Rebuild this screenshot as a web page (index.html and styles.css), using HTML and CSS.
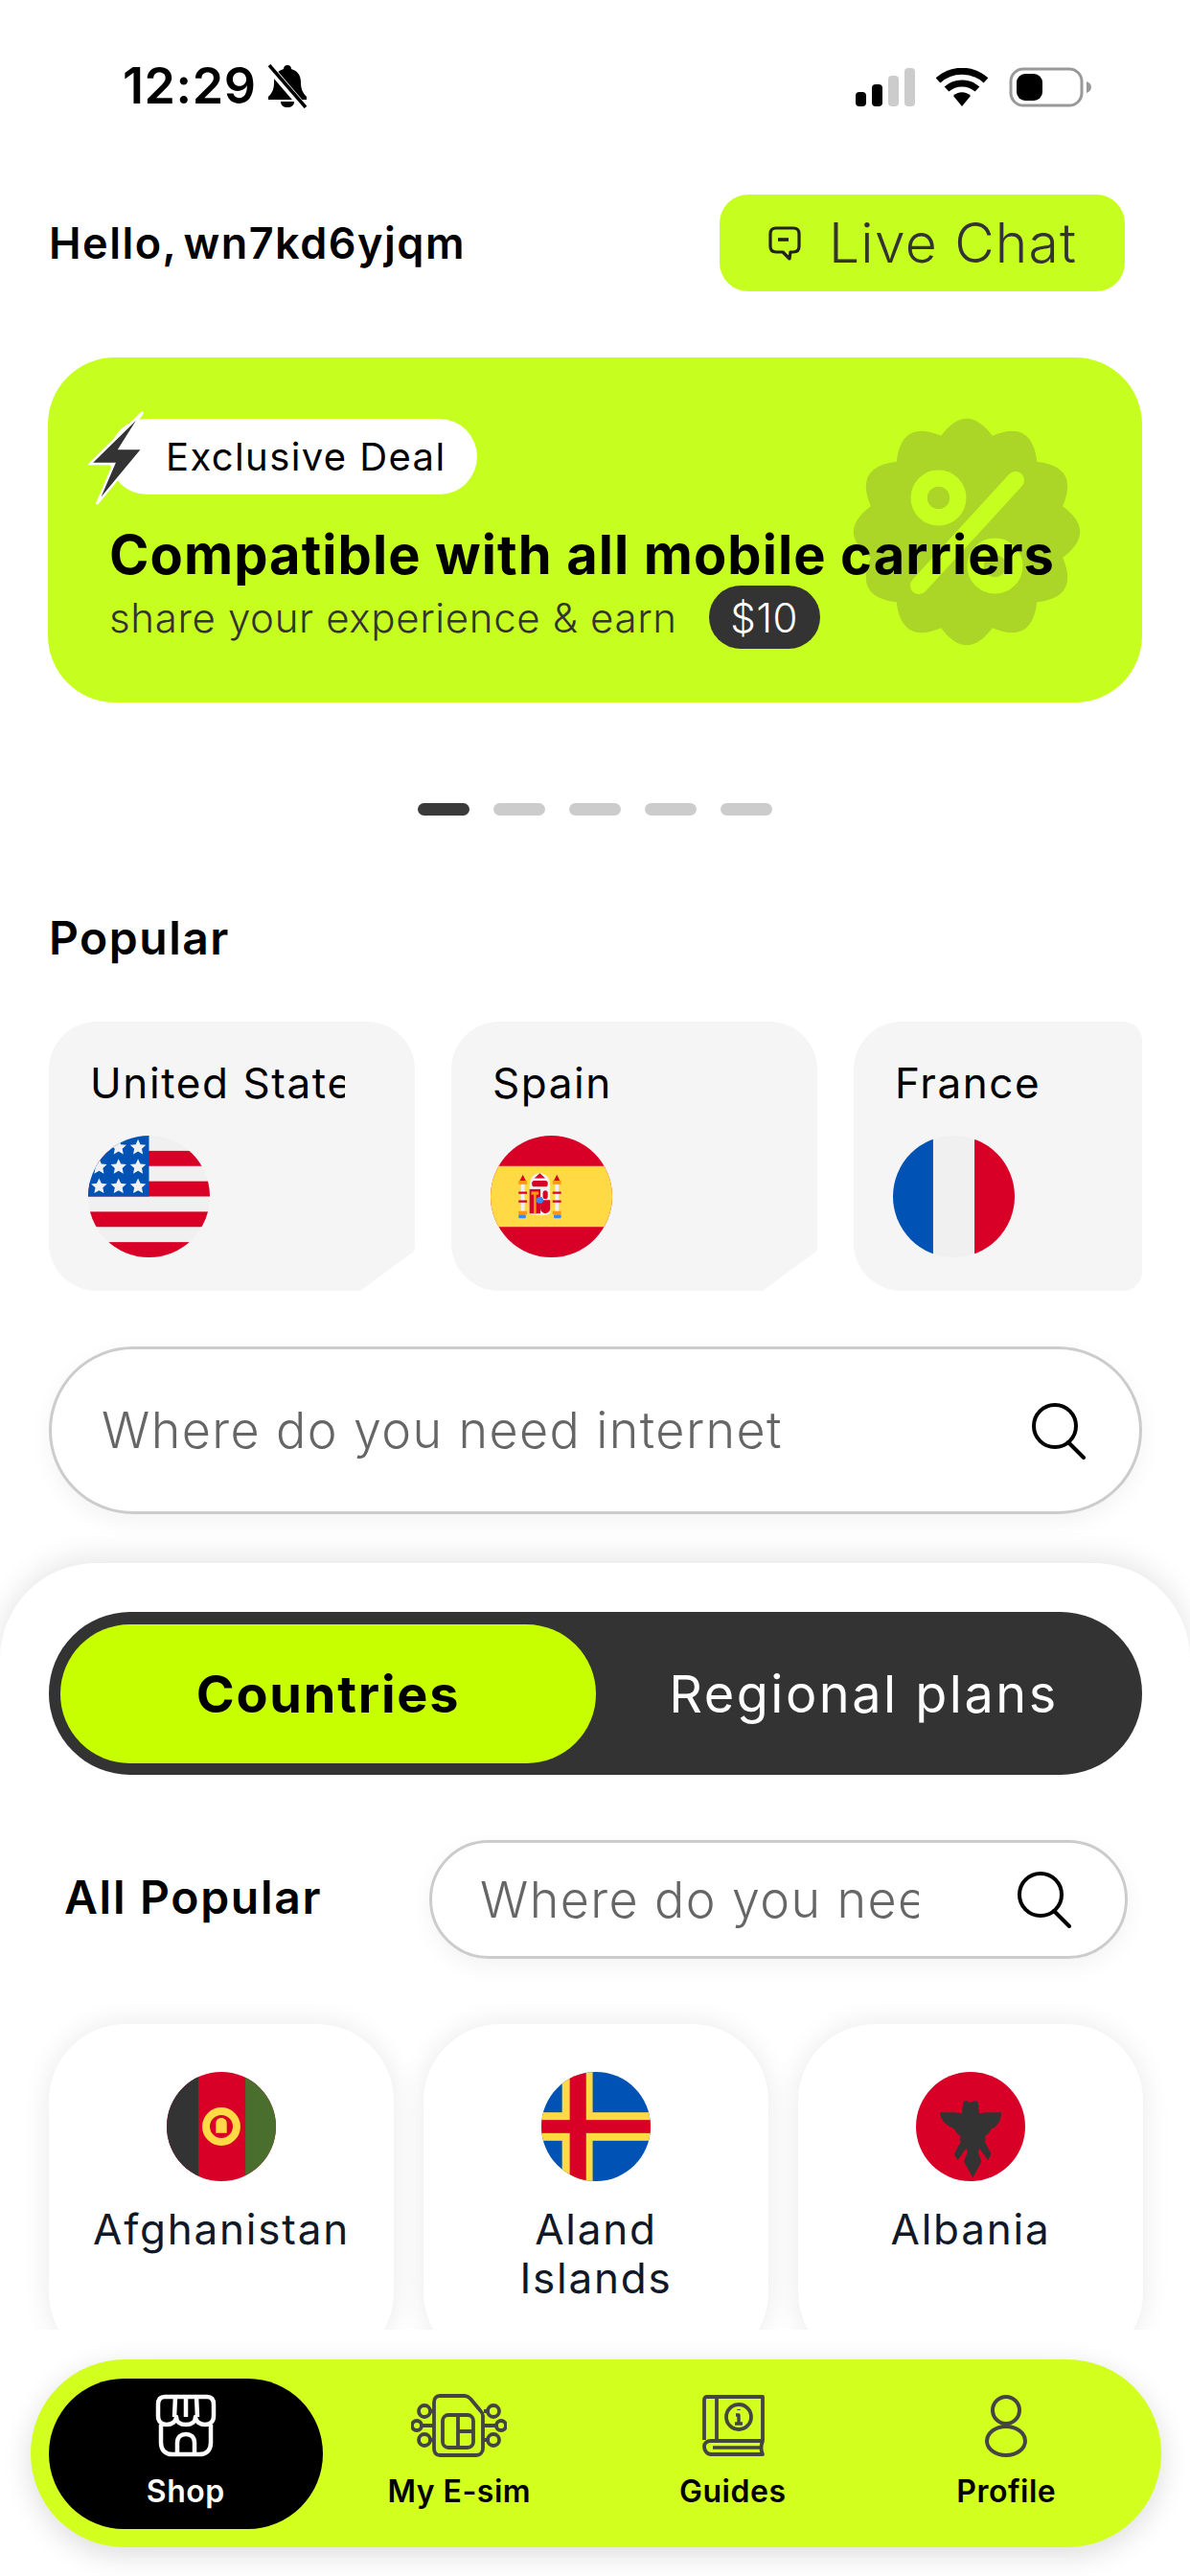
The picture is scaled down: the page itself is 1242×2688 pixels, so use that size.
FILE: index.html
```html
<!DOCTYPE html>
<html>
<head>
  <meta charset="utf-8">
  <title>Shop</title>
  <link rel="stylesheet" href="styles.css">
</head>
<body>

<div class="screen">
  <div class="content">

    <!-- Status bar -->
    <div class="status">
      <div class="status-left">
        <span class="time">12:29</span>
        <svg width="44" height="46" viewBox="0 0 44 46">
          <path d="M22 1c-3 0-4 2-4 4-7 2-10 7-10 14 0 7-2 11-6 15v3h40v-3c-4-4-6-8-6-15 0-7-3-12-10-14 0-2-1-4-4-4z" fill="#000"/>
          <path d="M15 39c0 4 3 6 7 6s7-2 7-6z" fill="#000"/>
          <path d="M3 3l36 42" stroke="#fff" stroke-width="8"/>
          <path d="M3 1l38 44" stroke="#000" stroke-width="3.5"/>
        </svg>
      </div>
      <div class="status-right">
        <svg width="62" height="40" viewBox="0 0 62 40">
          <rect x="0" y="25" width="11" height="15" rx="4" fill="#000"/>
          <rect x="17" y="17" width="11" height="23" rx="4" fill="#000"/>
          <rect x="34" y="8" width="11" height="32" rx="4" fill="#ccc"/>
          <rect x="51" y="0" width="11" height="40" rx="4" fill="#ccc"/>
        </svg>
        <svg width="54" height="40" viewBox="0 0 54 40">
          <path d="M2 13C16 0 38 0 52 13" fill="none" stroke="#000" stroke-width="7"/>
          <path d="M11 22c9-8 23-8 32 0" fill="none" stroke="#000" stroke-width="7"/>
          <path d="M18 29c5-5 13-5 18 0L27 40z" fill="#000"/>
        </svg>
        <svg width="88" height="42" viewBox="0 0 88 42">
          <rect x="2" y="2" width="74" height="38" rx="13" fill="none" stroke="#999" stroke-width="3"/>
          <rect x="8" y="7" width="27" height="28" rx="9" fill="#000"/>
          <path d="M81 15c3 1 5 3 5 6s-2 5-5 6z" fill="#999"/>
        </svg>
      </div>
    </div>

    <!-- Greeting -->
    <div class="header">
      <span class="hello">Hello, wn7kd6yjqm</span>
      <div class="chat-btn">
        <svg width="36" height="36" viewBox="0 0 36 36">
          <path d="M9 2h18c4 0 6 2 6 6v13c0 4-2 6-6 6h-3l-1 7-7-7H9c-4 0-6-2-6-6V8c0-4 2-6 6-6z" fill="none" stroke="#222" stroke-width="3.2" stroke-linejoin="round"/>
          <path d="M11 14h11" stroke="#222" stroke-width="3.6"/>
        </svg>
        <span>Live Chat</span>
      </div>
    </div>

    <!-- Banner -->
    <div class="banner">
      <svg class="banner-badge" width="244" height="244" viewBox="0 0 240 240">
        <path d="M218.5 93.6Q254 120 218.5 146.4Q236 187 192.1 192.1Q187 236 146.4 218.5Q120 254 93.6 218.5Q53 236 47.9 192.1Q4 187 21.5 146.4Q-14 120 21.5 93.6Q4 53 47.9 47.9Q53 4 93.6 21.5Q120 -14 146.4 21.5Q187 4 192.1 47.9Q236 53 218.5 93.6Z" fill="#abd627"/>
        <g fill="none" stroke="#c6ff1f">
          <circle cx="91" cy="85" r="20" stroke-width="17"/>
          <circle cx="149" cy="155" r="20" stroke-width="17"/>
          <path d="M170 67L71 175" stroke-width="18" stroke-linecap="round"/>
        </g>
      </svg>

      <div class="deal">
        <svg class="deal-bolt" width="60" height="100" viewBox="0 0 60 100">
          <path d="M57 2L2 56h25L9 98l48-58H33z" fill="#333" stroke="#fff" stroke-width="2.5"/>
        </svg>
        <span>Exclusive Deal</span>
      </div>
      <h1 class="banner-title">Compatible with all mobile carriers</h1>
      <div class="banner-sub">
        <span>share your experience &amp; earn</span>
        <span class="price">$10</span>
      </div>
    </div>

    <div class="dots">
      <span class="dot active"></span>
      <span class="dot"></span>
      <span class="dot"></span>
      <span class="dot"></span>
      <span class="dot"></span>
    </div>

    <h2 class="popular-title">Popular</h2>

    <!-- Popular countries -->
    <div class="popular">
      <div class="pop-card">
        <div class="pop-name">United States</div>
        <svg class="pop-flag" viewBox="0 0 100 100">
          <rect width="100" height="100" fill="#f0f0f0"/>
          <g fill="#d80027">
            <rect y="12.5" width="100" height="12.5"/><rect y="37.5" width="100" height="12.5"/>
            <rect y="62.5" width="100" height="12.5"/><rect y="87.5" width="100" height="12.5"/>
          </g>
          <rect width="50" height="50" fill="#0052b4"/>
          <g fill="#f0f0f0">
            <path id="star" d="M25 3l1.9 4.2 4.6.5-3.4 3.1.9 4.5-4-2.3-4 2.3.9-4.5-3.4-3.1 4.6-.5z"/>
            <use href="#star" x="16"/>
            <use href="#star" x="-16" y="16"/><use href="#star" y="16"/><use href="#star" x="16" y="16"/>
            <use href="#star" x="-16" y="32"/><use href="#star" y="32"/><use href="#star" x="16" y="32"/>
          </g>
        </svg>
      </div>
      <div class="pop-card">
        <div class="pop-name">Spain</div>
        <svg class="pop-flag" viewBox="0 0 100 100">
          <rect width="100" height="100" fill="#d80027"/>
          <rect y="25" width="100" height="50" fill="#ffda44"/>
          <rect x="25" y="40" width="3" height="22" fill="#f0f0f0"/>
          <rect x="53" y="40" width="3" height="22" fill="#f0f0f0"/>
          <path d="M24 37l2.500-5 2.500 5zM52 37l2.500-5 2.500 5z" fill="#d80027"/>
          <rect x="23" y="37" width="7" height="3" fill="#ff9811"/>
          <rect x="51" y="37" width="7" height="3" fill="#ff9811"/>
          <rect x="23" y="62" width="7" height="3" fill="#ff9811"/>
          <rect x="51" y="62" width="7" height="3" fill="#ff9811"/>
          <rect x="23" y="65" width="6" height="3" rx="1" fill="#338af3"/>
          <rect x="52" y="65" width="6" height="3" rx="1" fill="#338af3"/>
          <path d="M23 47h7M51 47h7M23 54h7M51 54h7" stroke="#d80027" stroke-width="1.800"/>
          <path d="M32 42c0-8 4-11 8.500-11s8.500 3 8.500 11v22c-3 2-14 2-17 0z" fill="#f0f0f0"/>
          <rect x="34" y="37" width="13" height="5" rx="2" fill="#d80027"/>
          <path d="M36 35l4.500-4 4.500 4z" fill="#d80027"/>
          <rect x="32" y="44" width="9" height="20" fill="#d80027"/>
          <rect x="33.500" y="46" width="6" height="2.500" fill="#ff9811"/>
          <rect x="35.500" y="48" width="2" height="16" fill="#ff9811"/>
          <path d="M41 53h8v7c0 3-4 4-4 4s-4-1-4-4z" fill="#d80027"/>
          <rect x="43" y="45" width="4" height="7" rx="2" fill="#d80027"/>
          <circle cx="40.500" cy="53" r="2.800" fill="#338af3"/>
        </svg>
      </div>
      <div class="pop-card">
        <div class="pop-name">France</div>
        <svg class="pop-flag" viewBox="0 0 100 100">
          <rect width="100" height="100" fill="#f0f0f0"/>
          <rect width="33" height="100" fill="#0052b4"/>
          <rect x="67" width="33" height="100" fill="#d80027"/>
        </svg>
      </div>
    </div>

    <div class="search search-main">
      <span class="search-text">Where do you need internet</span>
      <svg width="58" height="60" viewBox="0 0 58 60">
        <ellipse cx="25" cy="25" rx="22" ry="22" fill="none" stroke="#000" stroke-width="4"/>
        <path d="M39 42l16 16" stroke="#000" stroke-width="4" stroke-linecap="round"/>
      </svg>
    </div>

    <!-- Lower sheet -->
    <div class="sheet">
      <div class="segment">
        <div class="seg-item on">Countries</div>
        <div class="seg-item">Regional plans</div>
      </div>

      <div class="list-head">
        <span class="list-title">All Popular</span>
        <div class="search search-small">
          <span class="search-text">Where do you need internet</span>
          <svg width="58" height="60" viewBox="0 0 58 60">
            <ellipse cx="25" cy="25" rx="22" ry="22" fill="none" stroke="#000" stroke-width="4"/>
            <path d="M39 42l16 16" stroke="#000" stroke-width="4" stroke-linecap="round"/>
          </svg>
        </div>
      </div>

      <div class="country-grid">
        <div class="country">
          <svg class="country-flag" viewBox="0 0 100 100">
            <rect width="100" height="100" fill="#d80027"/>
            <rect width="29" height="100" fill="#333"/>
            <rect x="72" width="28" height="100" fill="#496e2d"/>
            <circle cx="50" cy="50" r="14" fill="none" stroke="#ffda44" stroke-width="7"/>
            <path d="M45 56V47c0-3 2-5 5-5s5 2 5 5v9z" fill="#ffda44"/>
          </svg>
          <div class="country-name">Afghanistan</div>
        </div>
        <div class="country">
          <svg class="country-flag" viewBox="0 0 100 100">
            <rect width="100" height="100" fill="#0052b4"/>
            <rect x="19" width="28" height="100" fill="#ffda44"/>
            <rect y="37" width="100" height="26" fill="#ffda44"/>
            <rect x="26" width="15" height="100" fill="#d80027"/>
            <rect y="44" width="100" height="12" fill="#d80027"/>
          </svg>
          <div class="country-name">Aland<br>Islands</div>
        </div>
        <div class="country">
          <svg class="country-flag" viewBox="0 0 100 100">
            <rect width="100" height="100" fill="#d80027"/>
            <path d="M22 37h14c1 0 4 1 6 1l1-9c0-3 3-3 7-1 4-2 7-2 7 1l1 9c2 0 5-1 6-1h14c0 7-3 13-9 15-1 3-3 5-6 7 1 2 1 4 0 5l6 11-3 6-8-11-1 4 3 8-8 15-8-15 3-8-1-4-8 11-3-6 6-11c-1-1-1-3 0-5-3-2-5-4-6-7-6-2-13-8-13-15z" fill="#333"/>
          </svg>
          <div class="country-name">Albania</div>
        </div>
      </div>
    </div>
  </div>

  <!-- Bottom tab bar -->
  <nav class="tabbar">
    <div class="tab active">
      <svg width="64" height="66" viewBox="0 0 64 66" fill="none" stroke="#fff" stroke-width="4.500" stroke-linejoin="round">
        <path d="M10 3h44c5 0 7 3 7 8v12c0 6-4 9-9 9s-10-3-10-8c0 5-4 8-10 8s-10-3-10-8c0 5-5 8-10 8s-9-3-9-9V11c0-5 2-8 7-8z"/>
        <path d="M21 3l-1 21M32 3v21M43 3l1 21"/>
        <path d="M6 32v19c0 8 5 12 12 12h28c7 0 12-4 12-12V32"/>
        <path d="M23 63V51c0-6 4-9 9-9s9 3 9 9v12"/>
      </svg>
      <span>Shop</span>
    </div>
    <div class="tab">
      <svg width="100" height="66" viewBox="0 0 100 66" fill="none" stroke="#444" stroke-width="3.800" stroke-linejoin="round">
        <path d="M30 2h26c3 0 4 1 6 3l10 12c2 2 3 3 3 6v34c0 4-3 7-7 7H30c-4 0-6-3-6-7V9c0-4 2-7 6-7z"/>
        <rect x="33" y="22" width="32" height="34" rx="6"/>
        <path d="M49 22v34M49 39h16"/>
        <circle cx="14" cy="18" r="6"/><circle cx="6" cy="33" r="5"/><circle cx="14" cy="48" r="6"/>
        <circle cx="86" cy="18" r="6"/><circle cx="94" cy="33" r="5"/><circle cx="86" cy="48" r="6"/>
        <path d="M20 18h4M11 33h13M20 48h4M76 18h4M75 33h14M75 48h5"/>
      </svg>
      <span>My E-sim</span>
    </div>
    <div class="tab">
      <svg width="66" height="66" viewBox="0 0 66 66" fill="none" stroke="#444" stroke-width="3.800" stroke-linejoin="round">
        <path d="M3 48V6c0-2 1-3 3-3h58v46H10c-4 0-7 2-7 6s3 8 7 8h54c-2-4-2-9 0-14"/>
        <path d="M16 3v46"/>
        <ellipse cx="39" cy="24" rx="13" ry="13"/>
        <path d="M39 16v1M36 22h3v9M35 31h8" stroke-width="3.400"/>
        <path d="M12 56h50" stroke-width="3.400"/>
      </svg>
      <span>Guides</span>
    </div>
    <div class="tab">
      <svg width="46" height="66" viewBox="0 0 46 66" fill="none" stroke="#444" stroke-width="4">
        <ellipse cx="23" cy="17" rx="14" ry="14"/>
        <ellipse cx="23" cy="49" rx="20" ry="15"/>
      </svg>
      <span>Profile</span>
    </div>
  </nav>
</div>

</body>
</html>
```

FILE: styles.css
```css
* {
  box-sizing: border-box;
}

body {
  margin: 0;
  background: #fff;
  font-family: "Inter", "Liberation Sans", sans-serif;
  color: #000;
}

.screen {
  position: relative;
  width: 1242px;
  height: 2688px;
  overflow: hidden;
  background: #fff;
}

/* everything above the tab bar is cut off at this height */
.content {
  height: 2431px;
  overflow: hidden;
}

/* Status bar */
.status {
  height: 203px;
  padding: 66px 101px 0 128px;
  display: flex;
  justify-content: space-between;
  align-items: flex-start;
}

.status-left {
  display: flex;
  align-items: center;
  gap: 10px;
}

.time {
  font-size: 52px;
  font-weight: 600;
  line-height: 48px;
  letter-spacing: 0.6px;
}

.status-right {
  display: flex;
  align-items: center;
  gap: 22px;
  padding-top: 4px;
}

/* Header */
.header {
  display: flex;
  justify-content: space-between;
  align-items: center;
  padding: 0 68px 0 51px;
}

.hello {
  font-size: 45px;
  font-weight: 600;
  letter-spacing: 1.5px;
  word-spacing: -6px;
}

.chat-btn {
  width: 423px;
  height: 101px;
  background: #c6ff1f;
  border-radius: 30px;
  display: flex;
  align-items: center;
  gap: 28px;
  padding-left: 50px;
  font-size: 57px;
  font-weight: 300;
  letter-spacing: 1.2px;
  color: #333;
}

/* Banner */
.banner {
  position: relative;
  margin: 69px 50px 0;
  height: 360px;
  padding: 64px 0 0 64px;
  background: #c6ff1f;
  border-radius: 70px;
}

.banner-badge {
  position: absolute;
  left: 837px;
  top: 60px;
}

.deal {
  position: relative;
  width: 384px;
  height: 79px;
  background: #fff;
  border-radius: 40px;
  display: flex;
  align-items: center;
  padding-left: 59px;
  font-size: 40px;
  letter-spacing: 1.4px;
}

.deal-bolt {
  position: absolute;
  left: -22px;
  top: -9px;
}

.banner-title {
  position: relative;
  margin: 31px 0 0;
  font-size: 56px;
  line-height: 64px;
  font-weight: 700;
  letter-spacing: 1.1px;
  white-space: nowrap;
}

.banner-sub {
  position: relative;
  display: flex;
  align-items: center;
  gap: 33px;
  font-size: 42px;
  font-weight: 300;
  letter-spacing: 0.65px;
  color: #333;
}

.price {
  width: 116px;
  height: 66px;
  background: #333;
  color: #fff;
  border-radius: 33px;
  display: flex;
  align-items: center;
  justify-content: center;
}

/* Pager */
.dots {
  display: flex;
  justify-content: center;
  gap: 25px;
  margin-top: 105px;
}

.dot {
  width: 54px;
  height: 13px;
  background: #ccc;
  border-radius: 7px;
}

.dot.active {
  background: #3a3a3a;
}

/* Popular */
.popular-title {
  margin: 100px 0 0 51px;
  font-size: 48px;
  line-height: 56px;
  font-weight: 600;
  letter-spacing: 1.5px;
}

.popular {
  display: flex;
  gap: 38px;
  width: 1141px;
  margin: 59px 0 0 51px;
  overflow: hidden;
  border-radius: 20px;
}

.pop-card {
  flex: 0 0 382px;
  height: 281px;
  padding: 37px 0 0 43px;
  background: #f5f5f5;
  border-radius: 50px;
  clip-path: polygon(0 0, 100% 0, 100% 239px, 325px 100%, 0 100%);
}

.pop-name {
  width: 266px;
  height: 54px;
  overflow: hidden;
  white-space: nowrap;
  font-size: 44px;
  line-height: 54px;
  letter-spacing: 1.6px;
}

.pop-flag {
  display: block;
  width: 127px;
  height: 127px;
  margin: 28px 0 0 -2px;
  border-radius: 50%;
}

/* Search boxes */
.search {
  display: flex;
  align-items: center;
  justify-content: space-between;
  background: #fff;
  border: 3px solid #ccc;
  border-radius: 90px;
  box-shadow: 0 8px 24px rgba(0, 0, 0, 0.05);
}

.search-main {
  width: 1141px;
  height: 175px;
  margin: 58px 0 0 51px;
  padding: 0 55px 0 52px;
}

.search-text {
  font-size: 52px;
  font-weight: 300;
  letter-spacing: 1.4px;
  color: #666;
  white-space: nowrap;
  overflow: hidden;
}

.search-small {
  width: 729px;
  height: 124px;
  padding: 0 55px 0 50px;
}

.search-small .search-text {
  width: 458px;
}

/* Lower sheet */
.sheet {
  margin-top: 51px;
  height: 900px;
  padding: 51px 50px 0 51px;
  background: #fff;
  border-radius: 100px 100px 0 0;
  box-shadow: 0 -6px 30px rgba(0, 0, 0, 0.1);
}

.segment {
  display: flex;
  align-items: center;
  height: 170px;
  padding: 0 12px;
  background: #333;
  border-radius: 85px;
}

.seg-item {
  flex: 0 0 559px;
  text-align: center;
  font-size: 54px;
  letter-spacing: 2.5px;
  color: #fff;
}

.seg-item.on {
  height: 145px;
  line-height: 145px;
  background: #c8ff00;
  border-radius: 73px;
  color: #000;
  font-weight: 700;
  letter-spacing: 1.8px;
}

.list-head {
  display: flex;
  align-items: center;
  justify-content: space-between;
  margin-top: 68px;
  padding: 0 15px 0 16px;
}

.list-title {
  margin-top: -6px;
  font-size: 48px;
  font-weight: 600;
  letter-spacing: 1.7px;
}

.country-grid {
  display: grid;
  grid-template-columns: repeat(3, 360px);
  gap: 31px;
  margin-top: 68px;
}

.country {
  height: 360px;
  padding-top: 50px;
  background: #fff;
  border-radius: 80px;
  box-shadow: 0 0 30px rgba(0, 0, 0, 0.09);
  text-align: center;
}

.country-flag {
  display: block;
  width: 114px;
  height: 114px;
  margin: 0 auto;
  border-radius: 50%;
}

.country-name {
  margin-top: 25px;
  font-size: 44px;
  line-height: 51px;
  letter-spacing: 1.8px;
  color: #111827;
}

/* Tab bar */
.tabbar {
  position: absolute;
  left: 32px;
  top: 2462px;
  width: 1180px;
  height: 196px;
  padding: 20px 19px;
  display: grid;
  grid-template-columns: repeat(4, 1fr);
  background: #d2ff1e;
  border-radius: 98px;
  box-shadow: 0 8px 30px rgba(0, 0, 0, 0.14);
}

.tab {
  height: 157px;
  padding-top: 16px;
  display: flex;
  flex-direction: column;
  align-items: center;
  gap: 16px;
  border-radius: 79px;
  font-size: 32px;
  font-weight: 600;
  line-height: 40px;
  letter-spacing: 0.5px;
}

.tab.active {
  background: #000;
  color: #fff;
}
```
